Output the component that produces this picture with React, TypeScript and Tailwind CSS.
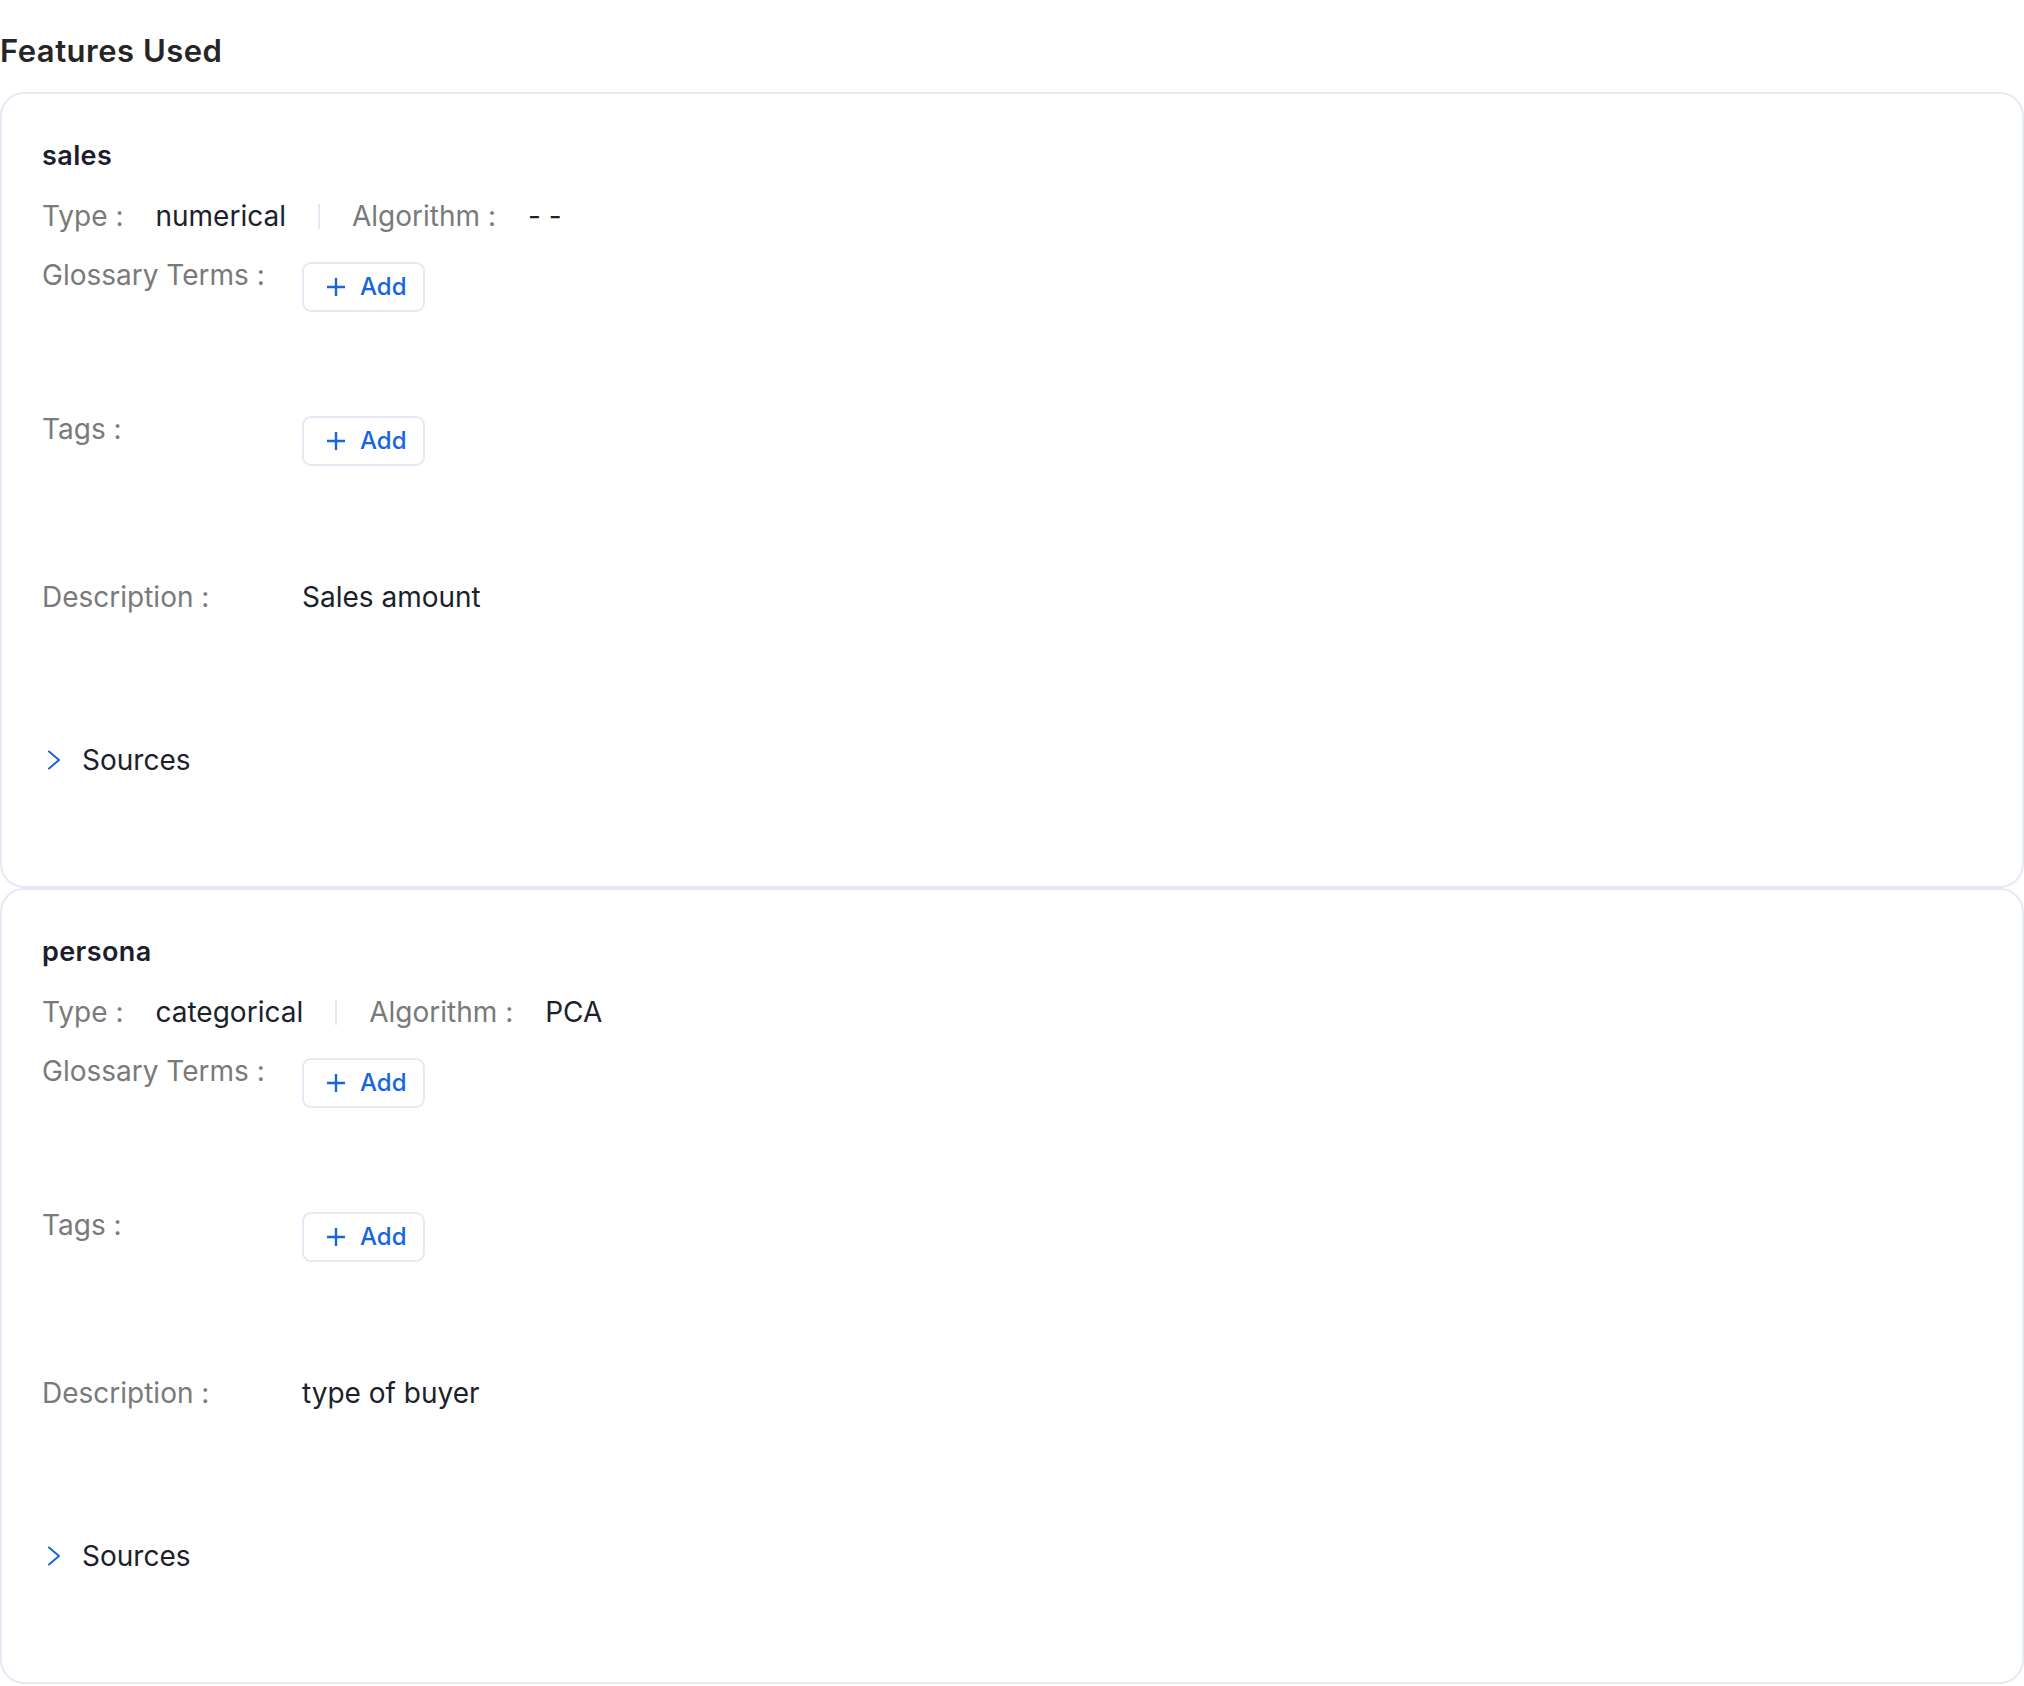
import React from 'react';

type Feature = {
  name: string;
  type: string;
  algorithm: string;
  description: string;
};

const features: Feature[] = [
  { name: 'sales', type: 'numerical', algorithm: '- -', description: 'Sales amount' },
  { name: 'persona', type: 'categorical', algorithm: 'PCA', description: 'type of buyer' },
];

const AddButton = () => (
  <button className="mt-[7px] flex h-[50px] items-center gap-[14px] rounded-[9px] border-2 border-[#e6e9f3] bg-white pl-[22px] pr-[16px] text-[24px] font-medium leading-none text-[#1766dc]">
    <svg width="20" height="20" viewBox="0 0 20 20" fill="none" stroke="currentColor" strokeWidth="2.4">
      <path d="M10 1v18M1 10h18" />
    </svg>
    Add
  </button>
);

const FeatureCard = ({ feature }: { feature: Feature }) => {
  return (
    <div className="rounded-[24px] border-2 border-[#e6e9f3] bg-white px-10 pb-[106px] pt-[46px]">
      {/* Name */}
      <div className="text-[27px] font-semibold leading-[32px] tracking-[0.4px] text-[#1b1e2b]">{feature.name}</div>

      {/* Type / Algorithm */}
      <div className="mt-[24px] flex h-10 items-center gap-8 text-[28px] leading-10">
        <span className="text-[#7a7a7a]">Type :</span>
        <span className="text-[#1d1f2c]">{feature.type}</span>
        <span className="h-[25px] w-[2px] bg-[#e6e9f3]" />
        <span className="text-[#7a7a7a]">Algorithm :</span>
        <span className="text-[#1d1f2c]">{feature.algorithm}</span>
      </div>

      {/* Glossary Terms */}
      <div className="mt-[19px] flex items-start text-[28px] leading-10">
        <span className="w-[260px] shrink-0 text-[#7a7a7a]">Glossary Terms :</span>
        <AddButton />
      </div>

      {/* Tags */}
      <div className="mt-[97px] flex items-start text-[28px] leading-10">
        <span className="w-[260px] shrink-0 text-[#7a7a7a]">Tags :</span>
        <AddButton />
      </div>

      {/* Description */}
      <div className="mt-[111px] flex items-start text-[28px] leading-10">
        <span className="w-[260px] shrink-0 text-[#7a7a7a]">Description :</span>
        <span className="text-[#1d1f2c]">{feature.description}</span>
      </div>

      {/* Sources */}
      <div className="mt-[123px] flex h-10 items-center text-[28px] leading-10 text-[#1d1f2c]">
        <svg
          className="ml-[5px]"
          width="14"
          height="20"
          viewBox="0 0 14 20"
          fill="none"
          stroke="#1766dc"
          strokeWidth="2"
          strokeLinecap="round"
          strokeLinejoin="round"
        >
          <polyline points="2,1.5 12,10 2,18.5" />
        </svg>
        <span className="ml-[21px]">Sources</span>
      </div>
    </div>
  );
};

export default function App() {
  return (
    <div className="min-h-screen bg-white font-['Inter',sans-serif]">
      <h2 className="pt-[33px] text-[31px] font-semibold leading-[36px] tracking-[0.5px] text-[#262626]">
        Features Used
      </h2>
      <div className="mt-[23px] flex flex-col">
        {features.map((f) => (
          <FeatureCard key={f.name} feature={f} />
        ))}
      </div>
    </div>
  );
}
